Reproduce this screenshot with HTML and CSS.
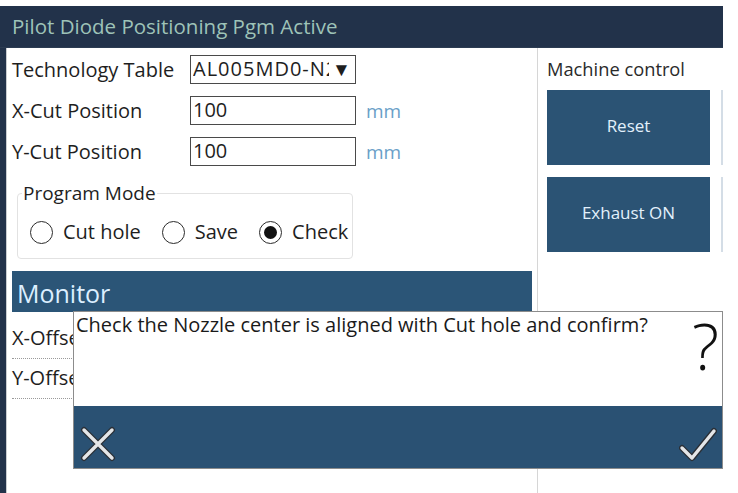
FILE: index.html
```html
<!DOCTYPE html>
<html>
<head>
<meta charset="utf-8">
<link rel="stylesheet" href="styles.css">
</head>
<body>
<div class="app">
  <div class="titlebar">Pilot Diode Positioning Pgm Active</div>
  <div class="content">
    <div class="left">
      <div class="form">
        <div class="lbl">Technology Table</div>
        <div class="select"><span class="sel-text">AL005MD0-N2</span><span class="arrow">▼</span></div>
        <div></div>
        <div class="lbl">X-Cut Position</div>
        <div class="input">100</div>
        <div class="unit">mm</div>
        <div class="lbl">Y-Cut Position</div>
        <div class="input">100</div>
        <div class="unit">mm</div>
      </div>
      <fieldset class="group">
        <legend>Program Mode</legend>
        <div class="radios">
          <div class="radio"><span class="circle"></span>Cut hole</div>
          <div class="radio"><span class="circle"></span>Save</div>
          <div class="radio"><span class="circle checked"></span>Check</div>
        </div>
      </fieldset>
      <div class="monitor">Monitor</div>
      <div class="mrows">
        <div class="mrow">X-Offset</div>
        <div class="mrow">Y-Offset</div>
      </div>
    </div>
    <div class="right">
      <div class="rtitle">Machine control</div>
      <div class="btns">
        <div class="btn">Reset</div>
        <div class="ghost"></div>
        <div class="btn">Exhaust ON</div>
        <div class="ghost"></div>
      </div>
    </div>
  </div>
  <div class="dialog">
    <div class="dlg-body">
      <div class="dlg-text">Check the Nozzle center is aligned with Cut hole and confirm?</div>
      <div class="qmark">?</div>
    </div>
    <div class="dlg-bar">
      <svg class="icon" width="36" height="36" viewBox="0 0 36 36">
        <path d="M4 4 L32 32 M32 4 L4 32" stroke="#2a2f36" stroke-width="6" stroke-linecap="round" fill="none"/>
        <path d="M4 4 L32 32 M32 4 L4 32" stroke="#e4e6e8" stroke-width="3.4" stroke-linecap="round" fill="none"/>
      </svg>
      <svg class="icon" width="38" height="36" viewBox="0 0 38 36">
        <path d="M3 22 L13 32 L35 5" stroke="#2a2f36" stroke-width="6" stroke-linecap="round" stroke-linejoin="round" fill="none"/>
        <path d="M3 22 L13 32 L35 5" stroke="#e4e6e8" stroke-width="3.4" stroke-linecap="round" stroke-linejoin="round" fill="none"/>
      </svg>
    </div>
  </div>
</div>
</body>
</html>
```
FILE: styles.css
```css
* { box-sizing: border-box; }
html, body { margin: 0; padding: 0; background: #ffffff; }
body { font-family: "Open Sans", "Noto Sans", sans-serif; color: #1e1e1e; }

.app {
  position: relative;
  margin-top: 6px;
  width: 723px;
  height: 487px;
  background: #22324a;
  display: flex;
  flex-direction: column;
  overflow: hidden;
}

.titlebar {
  height: 42px;
  padding: 6px 0 0 12px;
  font-size: 20.5px;
  line-height: 28px;
  color: #9ec3b8;
  border-bottom: 1px solid #2c3c52;
  white-space: nowrap;
}

.content {
  flex: 1;
  display: flex;
  margin-left: 6px;
  background: #ffffff;
  border-left: 1px solid #c9ccd0;
}

.left {
  width: 531px;
  padding: 7px 0 0 5px;
  border-right: 1px solid #d6d6d6;
}

.form {
  display: grid;
  grid-template-columns: 178px 166px auto;
  grid-auto-rows: 29px;
  row-gap: 12px;
  align-items: center;
}

.lbl { font-size: 20px; line-height: 29px; white-space: nowrap; }

.select, .input {
  height: 29px;
  border: 1.5px solid #4a4a4a;
  font-size: 20px;
  line-height: 26px;
  padding-left: 2px;
  background: #fff;
  display: flex;
  overflow: hidden;
}
.sel-text {
  flex: 0 0 136px;
  width: 136px;
  min-width: 0;
  overflow: hidden;
  white-space: nowrap;
  letter-spacing: 1px;
}
.arrow {
  flex: 0 0 24px;
  font-size: 19px;
  padding-left: 3px;
  line-height: 26px;
}

.unit {
  padding-left: 10px;
  font-size: 19px;
  color: #6a9fc8;
}

.group {
  margin: 16px 0 0 5px;
  width: 336px;
  height: 77px;
  padding: 0;
  border: 1px solid #e2e2e2;
  border-radius: 4px;
}
.group legend {
  margin-left: 4px;
  padding: 0 1px;
  font-size: 19px;
  line-height: 22px;
}
.radios {
  display: flex;
  gap: 21px;
  padding: 16px 0 0 12px;
  align-items: center;
}
.radio {
  display: flex;
  align-items: center;
  gap: 10px;
  font-size: 20px;
  line-height: 24px;
}
.circle {
  width: 23px;
  height: 23px;
  border: 1.5px solid #2b2b2b;
  border-radius: 50%;
  display: flex;
  align-items: center;
  justify-content: center;
}
.circle.checked::after {
  content: "";
  width: 13px;
  height: 13px;
  border-radius: 50%;
  background: #111;
}

.monitor {
  margin-top: 12px;
  width: 520px;
  height: 41px;
  background: #2b5577;
  color: #dcefff;
  font-size: 25px;
  line-height: 44px;
  padding-left: 5px;
}

.mrows { padding-top: 7px; }
.mrow {
  width: 520px;
  height: 40px;
  font-size: 20px;
  line-height: 38px;
  border-bottom: 1px dotted #9a9a9a;
  white-space: nowrap;
}

.right {
  flex: 1;
  padding: 9px 0 0 9px;
  overflow: hidden;
}
.rtitle {
  font-size: 18.3px;
  line-height: 24px;
  color: #2a2a2a;
  white-space: nowrap;
}
.btns {
  margin-top: 9px;
  display: grid;
  grid-template-columns: 163px 163px;
  grid-auto-rows: 75px;
  column-gap: 11px;
  row-gap: 12px;
}
.btn {
  background: #2b5374;
  color: #e2f0fb;
  font-size: 17px;
  display: flex;
  align-items: center;
  justify-content: center;
  padding-bottom: 4px;
}
.ghost { background: #d4dde6; }

.dialog {
  position: absolute;
  left: 73px;
  top: 305px;
  width: 650px;
  height: 158px;
  border: 1px solid #8c8c8c;
  background: #fff;
  display: flex;
  flex-direction: column;
}
.dlg-body {
  height: 94px;
  display: flex;
  justify-content: space-between;
  padding: 0 3px 0 2px;
}
.dlg-text {
  font-size: 20px;
  line-height: 26px;
  color: #1a1a1a;
  white-space: nowrap;
}
.qmark {
  font-size: 64px;
  font-weight: 300;
  line-height: 74px;
  margin-top: -3px;
  color: #111;
}
.dlg-bar {
  flex: 1;
  background: #2a5173;
  display: flex;
  justify-content: space-between;
  align-items: flex-end;
  padding: 0 5px 6px 6px;
}
```
